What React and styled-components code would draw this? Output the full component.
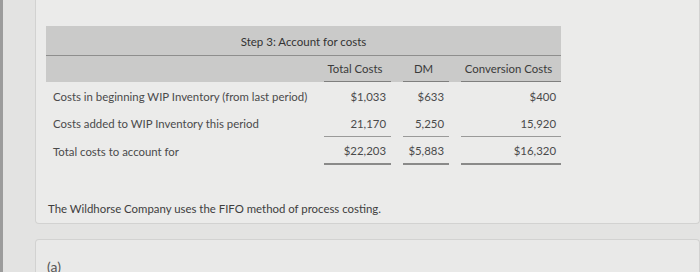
import React from 'react';
import styled, { createGlobalStyle } from 'styled-components';

const GlobalStyle = createGlobalStyle`
	html, body {
		margin: 0;
		padding: 0;
		background: #e3e3e2;
		font-family: 'Lato', 'Open Sans', sans-serif;
		color: #4a4a4a;
		overflow: hidden;
	}
`;

const Page = styled.div`
	height: 272px;
	border-left: 3px solid #9c9c9c;
	padding-left: 32px;
	display: flex;
	flex-flow: column;
	gap: 15px;
	box-sizing: border-box;
`;

const Card = styled.section`
	background: #ebebea;
	border: 1px solid #d2d2d1;
	border-top: none;
	border-radius: 0 0 4px 4px;
	padding: 26px 10px 0;
	height: 224px;
	flex-shrink: 0;
	box-sizing: border-box;
`;

const NextCard = styled.section`
	background: #e9e9e8;
	border: 1px solid #d2d2d1;
	border-bottom: none;
	border-radius: 4px 4px 0 0;
	padding: 16px 11px 0;
	flex: 1;

	span {
		font-size: 14px;
		color: #555;
	}
`;

const Table = styled.div`
	width: 515px;
`;

const TitleBar = styled.div`
	background: #cacac9;
	height: 30px;
	border-bottom: 1px solid #8e8e8d;
	display: flex;
	align-items: center;
	justify-content: center;
	font-size: 11.5px;
	color: #333;
	padding-top: 2px;
	box-sizing: border-box;
`;

const Row = styled.div`
	display: grid;
	grid-template-columns: 266px 67px 46px 100px;
	column-gap: 12px;
	background: ${(props) => (props.head ? '#cacac9' : 'transparent')};
	height: ${(props) => props.h || 27}px;
`;

const Cell = styled.div`
	display: flex;
	align-items: center;
	justify-content: ${(props) => (props.center ? 'center' : 'flex-end')};
	padding: 0 5px 0 0;
	font-size: 11.4px;
	border-bottom: ${(props) => props.rule || 'none'};
	white-space: nowrap;
	color: ${(props) => (props.head ? '#3a3a3a' : '#4a4a4a')};

	&:first-child {
		justify-content: flex-start;
		padding: 0 0 0 7px;
	}
`;

const Note = styled.p`
	margin: 37px 0 0 2px;
	font-size: 11.4px;
	color: #3e3e3e;
`;

const rows = [
	{ label: 'Costs in beginning WIP Inventory (from last period)', values: ['$1,033', '$633', '$400'], h: 28 },
	{ label: 'Costs added to WIP Inventory this period', values: ['21,170', '5,250', '15,920'], rule: '1px solid #9a9a99', h: 27 },
	{ label: 'Total costs to account for', values: ['$22,203', '$5,883', '$16,320'], rule: '2px solid #8a8a89', h: 28 },
];

const App = () => {
	return (
		<>
			<GlobalStyle />
			<Page>
				<Card>
					<Table>
						<TitleBar>Step 3: Account for costs</TitleBar>
						<Row head h={26}>
							<Cell head />
							{['Total Costs', 'DM', 'Conversion Costs'].map((h) => (
								<Cell head center key={h} rule="1px solid #7f7f7e">
									{h}
								</Cell>
							))}
						</Row>
						{rows.map((r) => (
							<Row key={r.label} h={r.h}>
								<Cell>{r.label}</Cell>
								{r.values.map((v, i) => (
									<Cell key={i} rule={r.rule}>
										{v}
									</Cell>
								))}
							</Row>
						))}
					</Table>
					<Note>The Wildhorse Company uses the FIFO method of process costing.</Note>
				</Card>
				<NextCard>
					<span>(a)</span>
				</NextCard>
			</Page>
		</>
	);
};

export default App;
